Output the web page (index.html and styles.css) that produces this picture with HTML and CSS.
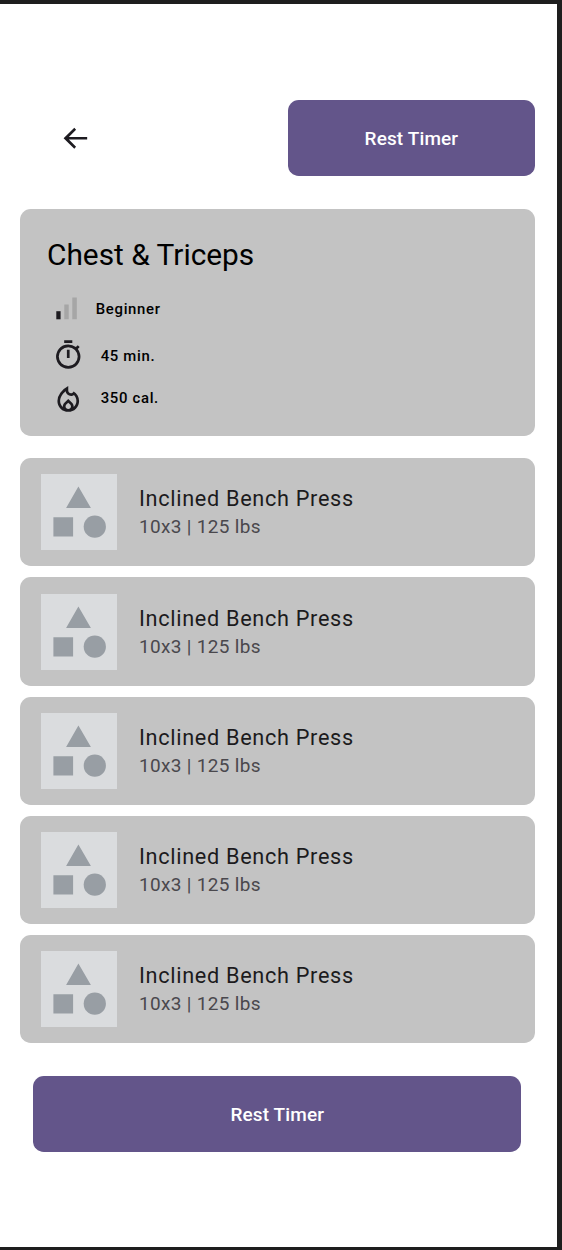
FILE: index.html
```
<!DOCTYPE html>
<html lang="en">
<head>
<meta charset="utf-8">
<title>Chest &amp; Triceps</title>
<link rel="stylesheet" href="styles.css">
</head>
<body>
<svg class="defs" width="0" height="0" aria-hidden="true">
  <symbol id="shapes" viewBox="0 0 76 76">
    <path d="M37.4 12.6 49.9 34H25.1ZM12.4 43.2h19.7v19.2H12.4Z"/>
    <circle cx="53.8" cy="52.7" r="11.1"/>
  </symbol>
</svg>
<main class="screen">
  <header class="topbar">
    <a class="back" href="#" aria-label="Back">
      <svg class="icon" viewBox="0 0 24 24"><path d="M7.3 12.9 12.6 18.3 11.3 19.7 3.4 12 11.3 4.3 12.6 5.7 7.3 11.1H20.8V12.9Z"/></svg>
    </a>
    <button class="button">Rest Timer</button>
  </header>
  <section class="card summary">
    <h1 class="title">Chest &amp; Triceps</h1>
    <ul class="stats">
      <li class="stat stat-level">
        <svg class="bars" viewBox="0 0 22 23"><path class="bar-on" d="M.3 14.2h4.3v8.1H.3Z"/><path class="bar-off" d="M8.3 7.4h4.4v14.9H8.3ZM16.3.5h4.5v21.8h-4.5Z"/></svg>
        <span>Beginner</span>
      </li>
      <li class="stat stat-time">
        <svg class="icon" viewBox="0 0 24 24"><path d="M9 1h6v2H9zm2 7h2v6h-2zm8.03-.61 1.42-1.42c-.43-.51-.9-.99-1.41-1.41l-1.42 1.42A8.96 8.96 0 0 0 12 4a9 9 0 1 0 7.03 3.39ZM12 20a7 7 0 1 1 0-14 7 7 0 0 1 0 14Z"/></svg>
        <span>45 min.</span>
      </li>
      <li class="stat stat-heat">
        <svg class="icon" viewBox="0 -960 960 960"><path d="M240-400q0 52 21 98.5t60 81.5q-1-5-1-9v-9q0-32 12-60t35-51l113-111 113 111q23 23 35 51t12 60v9q0 4-1 9 39-35 60-81.5t21-98.5q0-50-18.500-94.500T648-574q-20 13-42 19.500t-45 6.500q-62 0-107.500-41T401-690q-39 33-69 68.500t-50.500 72Q261-513 250.500-475T240-400Zm240 52-57 56q-11 11-17 25t-6 29q0 32 23.500 55t56.500 23q33 0 56.500-23t23.500-55q0-16-6-29.500T537-292l-57-56Zm0-492v132q0 34 23.500 57t57.500 23q18 0 33.500-7.500T622-658l18-22q74 42 117 117t43 163q0 134-93 227T480-80q-134 0-227-93t-93-227q0-129 86.500-245T480-840Z"/></svg>
        <span>350 cal.</span>
      </li>
    </ul>
  </section>
  <section class="exercises">
    <article class="card exercise">
      <svg class="thumb"><use href="#shapes"/></svg>
      <div><h2 class="name">Inclined Bench Press</h2><p class="detail">10x3 | 125 lbs</p></div>
    </article>
    <article class="card exercise">
      <svg class="thumb"><use href="#shapes"/></svg>
      <div><h2 class="name">Inclined Bench Press</h2><p class="detail">10x3 | 125 lbs</p></div>
    </article>
    <article class="card exercise">
      <svg class="thumb"><use href="#shapes"/></svg>
      <div><h2 class="name">Inclined Bench Press</h2><p class="detail">10x3 | 125 lbs</p></div>
    </article>
    <article class="card exercise">
      <svg class="thumb"><use href="#shapes"/></svg>
      <div><h2 class="name">Inclined Bench Press</h2><p class="detail">10x3 | 125 lbs</p></div>
    </article>
    <article class="card exercise">
      <svg class="thumb"><use href="#shapes"/></svg>
      <div><h2 class="name">Inclined Bench Press</h2><p class="detail">10x3 | 125 lbs</p></div>
    </article>
  </section>
  <button class="button button-wide">Rest Timer</button>
</main>
</body>
</html>
```
FILE: styles.css
```
* { box-sizing: border-box; margin: 0; padding: 0; }
body {
  height: 1250px;
  padding: 4px 5.3px 2.7px 0;
  background: #1e1e1e;
  font-family: Roboto, "Liberation Sans", sans-serif;
  color: #1c1b1d;
}
.defs { position: absolute; }
.screen {
  height: 100%;
  padding: 96.2px 22px 0 19.8px;
  background: #fff;
}
.topbar {
  display: flex;
  align-items: center;
  justify-content: space-between;
  padding-left: 39.400px;
}
.back { display: flex; color: inherit; }
.icon { display: block; flex: none; width: 32.500px; height: 32.500px; fill: #1d1b20; }
.button {
  display: block;
  width: 246.600px;
  height: 75.800px;
  border: 0;
  border-radius: 10.800px;
  background: #63558a;
  color: #fff;
  font: 500 18.980px/27px Roboto, "Liberation Sans", sans-serif;
  letter-spacing: .14px;
}
.button-wide { width: 488px; margin: 32.700px auto 0; padding-top: 1px; }
.card { border-radius: 10.800px; background: #c3c3c3; }
.summary {
  height: 227.300px;
  margin-top: 32.700px;
  padding: 27.200px 27.200px 0;
}
.title { font-size: 29.830px; font-weight: 400; line-height: 38px; color: #000; }
.stats { list-style: none; }
.stat {
  display: flex;
  align-items: center;
  color: #000;
  font-size: 14.900px;
  font-weight: 500;
  line-height: 22px;
  letter-spacing: .68px;
}
.stat-level { gap: 18px; margin-top: 22.800px; padding-left: 8.800px; }
.stat-level span { padding-top: 1px; }
.bars { flex: none; width: 22px; height: 23px; }
.bar-on { fill: #1d1b20; }
.bar-off { fill: #a6a6a6; }
.stat-time { gap: 16px; margin-top: 19.600px; padding-left: 5.200px; }
.stat-heat { gap: 16px; margin-top: 10.300px; padding-left: 5.200px; }
.exercises { display: grid; gap: 11.100px; margin-top: 22.200px; }
.exercise {
  display: flex;
  align-items: center;
  gap: 21.700px;
  height: 108.200px;
  padding-left: 21.500px;
}
.thumb { flex: none; width: 76px; height: 76px; background: #dadcde; fill: #989ea4; }
.name { font-size: 21.690px; font-weight: 400; line-height: 30px; letter-spacing: .68px; }
.detail { color: #4a484d; font-size: 18.980px; line-height: 26px; letter-spacing: .34px; }
```
